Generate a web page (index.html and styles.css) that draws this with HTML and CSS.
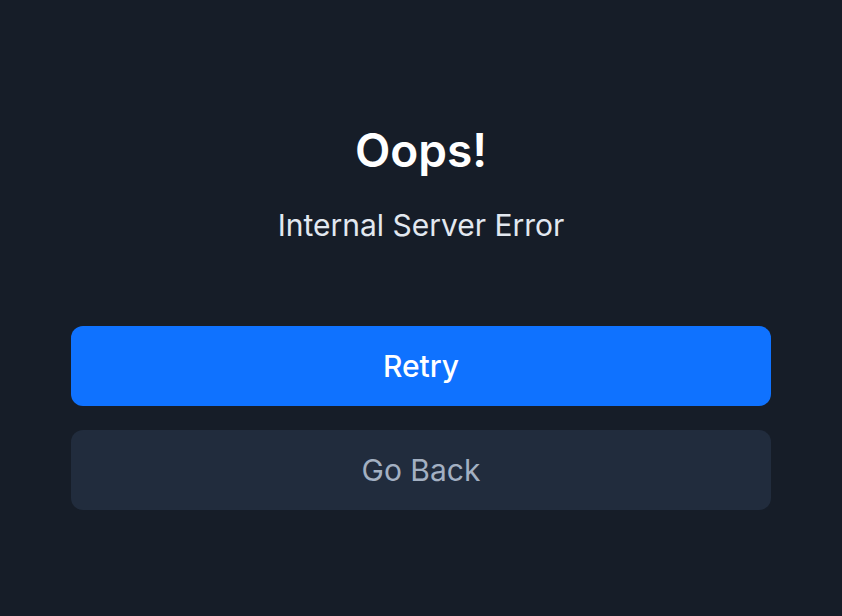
FILE: index.html
```html
<!DOCTYPE html>
<html lang="en">
<head>
    <meta charset="UTF-8">
    <meta name="viewport" content="width=device-width, initial-scale=1.0">
    <title>Error</title>
    <link rel="stylesheet" href="styles.css">
</head>
<body>
    <div class="error-page">
        <div class="message">
            <h1>Oops!</h1>
            <p class="subtitle">Internal Server Error</p>
        </div>
        <div class="actions">
            <button type="button" class="btn btn-primary">Retry</button>
            <button type="button" class="btn btn-secondary">Go Back</button>
        </div>
    </div>
</body>
</html>
```

FILE: styles.css
```css
html, body {
    height: 100%;
}
body {
    font-family: Inter, "Noto Sans", sans-serif;
    margin: 0;
    padding: 0;
    background-color: #161d28;
    color: #ffffff;
}
.error-page {
    padding: 123px 71px 0;
}
.message {
    text-align: center;
    margin-bottom: 83px;
}
h1 {
    font-size: 46px;
    font-weight: 600;
    line-height: 54px;
    margin: 0 0 30px;
}
.subtitle {
    font-size: 30px;
    line-height: 36px;
    margin: 0;
    color: #e2e8f0;
}
.actions {
    display: flex;
    flex-direction: column;
    gap: 24px;
}
.btn {
    height: 80px;
    border: none;
    border-radius: 12px;
    font-family: inherit;
    font-size: 30px;
    font-weight: 500;
    cursor: pointer;
}
.btn-primary {
    background-color: #0f72ff;
    color: #ffffff;
}
.btn-secondary {
    background-color: #212c3d;
    color: #a3b0c2;
    font-weight: 400;
}
```
